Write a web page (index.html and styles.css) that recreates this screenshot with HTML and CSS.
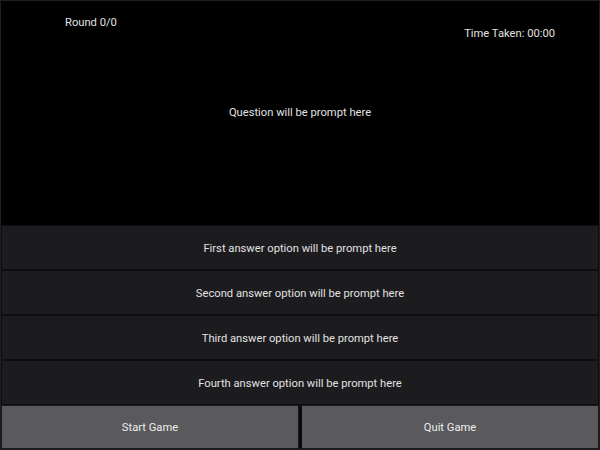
FILE: index.html
```html
<!DOCTYPE html>
<html>
<head>
<meta charset="utf-8">
<link rel="stylesheet" href="styles.css">
</head>
<body>
<div class="app">
  <div class="header">
    <div class="status">
      <div class="round">Round 0/0</div>
      <div class="timer">Time Taken: 00:00</div>
    </div>
    <div class="question">Question will be prompt here</div>
  </div>
  <div class="answers">
    <div class="answer">First answer option will be prompt here</div>
    <div class="answer">Second answer option will be prompt here</div>
    <div class="answer">Third answer option will be prompt here</div>
    <div class="answer">Fourth answer option will be prompt here</div>
  </div>
  <div class="controls">
    <div class="btn">Start Game</div>
    <div class="btn">Quit Game</div>
  </div>
</div>
</body>
</html>
```
FILE: styles.css
```css
html, body {
  margin: 0;
  padding: 0;
  background: #000;
}
.app {
  width: 600px;
  height: 450px;
  box-sizing: border-box;
  border: 1px solid #1e1d20;
  display: flex;
  flex-direction: column;
  font-family: Roboto, "Liberation Sans", sans-serif;
  font-size: 11.2px;
  color: #e2e2e2;
  background: #000;
}
.header {
  height: 224px;
  display: grid;
}
.status, .question {
  grid-area: 1 / 1;
}
.status {
  display: flex;
  justify-content: space-between;
  align-items: flex-start;
  padding: 0 44px 0 64px;
}
.round {
  margin-top: 15px;
}
.timer {
  margin-top: 26px;
}
.question {
  align-self: center;
  justify-self: center;
  margin-bottom: 2px;
}
.answers {
  display: flex;
  flex-direction: column;
}
.answer {
  height: 45px;
  box-sizing: border-box;
  border: 1px solid #0e0d10;
  padding-top: 1px;
  background: #1c1b1e;
  display: flex;
  align-items: center;
  justify-content: center;
}
.controls {
  flex: 1;
  display: flex;
}
.btn {
  flex: 1;
  box-sizing: border-box;
  border: 1px solid #1a191c;
  padding-top: 1px;
  background: #5a595c;
  color: #ececec;
  display: flex;
  align-items: center;
  justify-content: center;
}
.btn + .btn {
  border-left: 3px solid #0a0a0a;
}
```
